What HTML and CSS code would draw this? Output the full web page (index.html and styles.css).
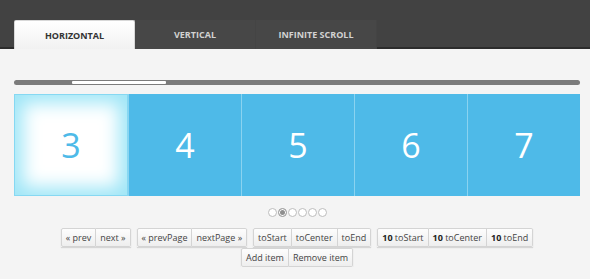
FILE: index.html
```html
<!DOCTYPE html>
<html lang="en">
<head>
    <meta charset="UTF-8">
    <title>Slider</title>
    <link rel="stylesheet" href="styles.css">
</head>
<body>
    <div class="header">
        <ul class="tabs">
            <li class="tab active">Horizontal</li>
            <li class="tab">Vertical</li>
            <li class="tab">Infinite Scroll</li>
        </ul>
    </div>

    <div class="content">
        <div class="scrollbar"><div class="handle"></div></div>

        <ul class="frame">
            <li class="slide active">3</li>
            <li class="slide">4</li>
            <li class="slide">5</li>
            <li class="slide">6</li>
            <li class="slide">7</li>
        </ul>

        <ul class="pages">
            <li></li>
            <li class="active"></li>
            <li></li>
            <li></li>
            <li></li>
            <li></li>
        </ul>

        <div class="controls">
            <div class="row">
                <div class="btn-group">
                    <button>« prev</button><button>next »</button>
                </div>
                <div class="btn-group">
                    <button>« prevPage</button><button>nextPage »</button>
                </div>
                <div class="btn-group">
                    <button>toStart</button><button>toCenter</button><button>toEnd</button>
                </div>
                <div class="btn-group">
                    <button><b>10</b> toStart</button><button><b>10</b> toCenter</button><button><b>10</b> toEnd</button>
                </div>
            </div>
            <div class="row">
                <div class="btn-group">
                    <button>Add item</button><button>Remove item</button>
                </div>
            </div>
        </div>
    </div>
</body>
</html>
```

FILE: styles.css
```css
body {
    margin: 0;
    background: #f4f4f4;
    font-family: 'Open Sans', 'Noto Sans', sans-serif;
    color: #333;
}

ul {
    list-style: none;
    margin: 0;
    padding: 0;
}

/* Barra do topo */
.header {
    height: 47px;
    background: #424242;
    border-bottom: 2px solid #2c2c2c;
    padding-left: 14px;
    display: flex;
    align-items: flex-end;
}

.tabs {
    display: flex;
    margin-bottom: -2px;
}

.tab {
    width: 121px;
    height: 29px;
    display: flex;
    align-items: center;
    justify-content: center;
    background: #474747;
    color: #d2d2d2;
    font-size: 9px;
    font-weight: 700;
    text-transform: uppercase;
    border-right: 1px solid #444;
    box-sizing: border-box;
}

.tab.active {
    background: linear-gradient(#ffffff, #f1f1f1);
    color: #333;
    border: 1px solid #d8d8d8;
    border-bottom: none;
    border-radius: 2px 2px 0 0;
}

.content {
    margin: 0 10px 0 14px;
    padding-top: 31px;
}

/* Barra de rolagem */
.scrollbar {
    height: 5px;
    background: #7b7b7b;
    border-radius: 3px;
    padding: 1px 0 0 58px;
    box-sizing: border-box;
}

.handle {
    width: 94px;
    height: 3px;
    background: #fff;
    border-radius: 1px;
}

/* Slides */
.frame {
    display: flex;
    margin-top: 9px;
    height: 102px;
}

.slide {
    flex: 1;
    display: flex;
    align-items: center;
    justify-content: center;
    background: #4ebae8;
    color: #fff;
    font-size: 34px;
    border-left: 1px solid #8ad3f0;
}

.slide:first-child {
    border-left: none;
}

.slide.active {
    background: #fff;
    color: #4ebae8;
    border: 1px solid #86d8f2;
    box-shadow: inset 0 0 18px 8px #9fe6f7;
}

/* Paginação */
.pages {
    display: flex;
    justify-content: center;
    gap: 1px;
    margin-top: 12px;
}

.pages li {
    width: 7px;
    height: 7px;
    border: 1px solid #bdbdbd;
    border-radius: 50%;
    background: #fff;
}

.pages li.active {
    background: #8e8e8e;
    box-shadow: inset 0 0 0 1px #fff;
    border-color: #a5a5a5;
}

/* Botões */
.controls {
    margin-top: 11px;
    display: flex;
    flex-direction: column;
    gap: 1px;
}

.row {
    display: flex;
    justify-content: center;
    gap: 6px;
}

.btn-group {
    display: flex;
    box-shadow: 0 1px 1px rgba(0, 0, 0, 0.12);
}

.btn-group button {
    height: 19px;
    padding: 0 4px;
    margin: 0;
    font-family: inherit;
    font-size: 9px;
    color: #444;
    background: linear-gradient(#fdfdfd, #eeeeee);
    border: 1px solid #d4d4d4;
    border-left: none;
}

.btn-group button:first-child {
    border-left: 1px solid #d4d4d4;
    border-radius: 2px 0 0 2px;
}

.btn-group button:last-child {
    border-radius: 0 2px 2px 0;
}

.btn-group b {
    color: #222;
}
```
